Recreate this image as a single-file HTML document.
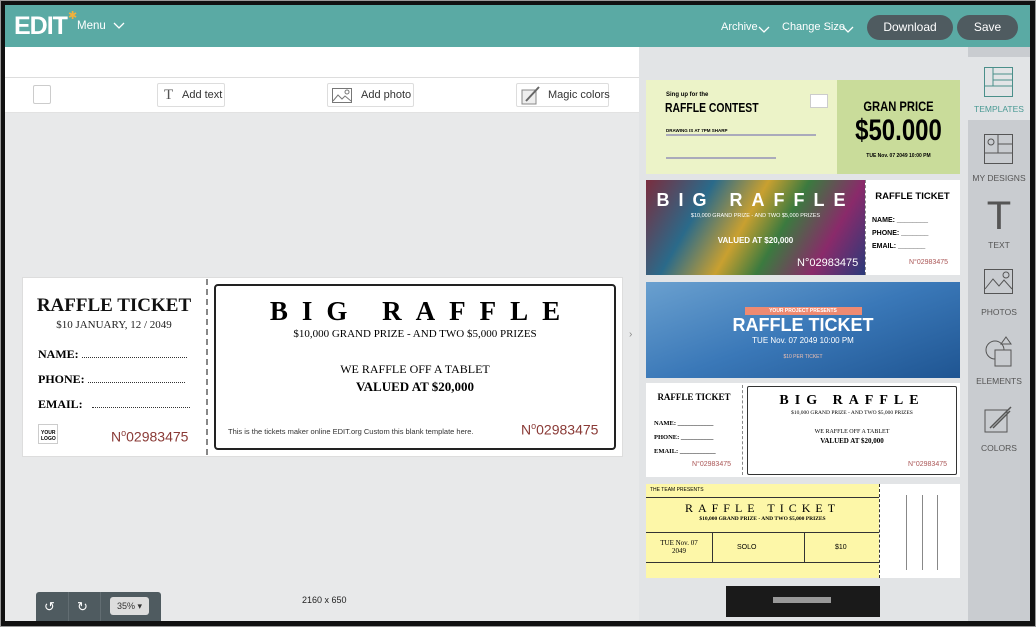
<!DOCTYPE html>
<html><head><meta charset="utf-8"><style>
*{margin:0;padding:0;box-sizing:border-box}
body{width:1036px;height:627px;overflow:hidden;background:#9a9a9a;font-family:"Liberation Sans",sans-serif;position:relative}
.a{position:absolute;white-space:nowrap}
.frame{left:1px;top:1px;width:1034px;height:625px;background:#111}
.hdr{left:5px;top:5px;width:1025px;height:42px;background:#5aaaa4;color:#fff}
.btn{background:#4f5b60;color:#fff;border-radius:16px;font-size:12px;text-align:center;line-height:25px;height:25px}
.serif{font-family:"Liberation Serif",serif}
.tb{border:1px solid #ddd;background:#fff;height:24px;font-size:11px;line-height:22px;color:#333;border-radius:2px}
.side{font-size:8.5px;color:#555;text-align:center;width:62px;left:968px}
.dl{display:inline-block;border-bottom:1px dotted #333;height:9px;vertical-align:baseline}
</style></head><body>
<div class="a frame"></div>
<div class="a" style="left:5px;top:5px;width:1025px;height:616px;background:#e8e9ea"></div>
<div class="a hdr">
 <div class="a" style="left:9px;top:7px;font-size:25px;font-weight:bold;letter-spacing:-1px">EDIT</div>
 <div class="a" style="left:63px;top:4px;color:#f2b13a;font-size:11px">✱</div>
 <div class="a" style="left:72px;top:15px;font-size:11.5px">Menu</div>
 <svg class="a" style="left:108px;top:17px" width="12" height="8"><path d="M1 1l5 5 5-5" stroke="#fff" fill="none" stroke-width="1.3"/></svg>
 <div class="a" style="left:716px;top:16px;font-size:11px">Archive</div>
 <svg class="a" style="left:753px;top:21px" width="12" height="8"><path d="M1 1l5 5 5-5" stroke="#fff" fill="none" stroke-width="1.3"/></svg>
 <div class="a" style="left:777px;top:16px;font-size:11px">Change Size</div>
 <svg class="a" style="left:837px;top:21px" width="12" height="8"><path d="M1 1l5 5 5-5" stroke="#fff" fill="none" stroke-width="1.3"/></svg>
 <div class="a btn" style="left:862px;top:10px;width:86px">Download</div>
 <div class="a btn" style="left:952px;top:10px;width:61px">Save</div>
</div>
<!-- toolbar -->
<div class="a" style="left:5px;top:47px;width:634px;height:66px;background:#fff"></div>
<div class="a" style="left:5px;top:77px;width:634px;height:1px;background:#ddd"></div>
<div class="a" style="left:5px;top:112px;width:634px;height:1px;background:#e2e2e2"></div>
<div class="a" style="left:33px;top:85px;width:18px;height:19px;border:1px solid #ccc;border-radius:2px"></div>
<div class="a tb" style="left:157px;top:83px;width:68px"><span style="position:absolute;left:6px;top:0;font-size:15px;font-family:'Liberation Serif',serif;color:#555">T</span><span style="position:absolute;left:24px">Add text</span></div>
<div class="a tb" style="left:327px;top:83px;width:87px"><svg style="position:absolute;left:4px;top:4px" width="20" height="15"><rect x=".5" y=".5" width="19" height="14" fill="none" stroke="#777"/><path d="M1 13l5-6 4 4 3-3 6 5" stroke="#777" fill="none"/><circle cx="15" cy="4" r="2" fill="none" stroke="#777"/></svg><span style="position:absolute;left:33px">Add photo</span></div>
<div class="a tb" style="left:516px;top:83px;width:93px"><svg style="position:absolute;left:4px;top:2px" width="20" height="19"><rect x="1" y="4" width="14" height="14" fill="#eee" stroke="#888"/><path d="M5 15L18 1" stroke="#666" stroke-width="2"/></svg><span style="position:absolute;left:31px">Magic colors</span></div>
<!-- main ticket -->
<div class="a" style="left:22px;top:277px;width:601px;height:180px;background:#fff;border:1px solid #ddd"></div>
<div class="a" style="left:206px;top:279px;height:176px;border-left:2px dashed #888"></div>
<div class="a serif" style="left:22px;top:295px;width:184px;text-align:center;font-size:19px;font-weight:bold;color:#111">RAFFLE TICKET</div>
<div class="a serif" style="left:22px;top:319px;width:184px;text-align:center;font-size:11px;color:#222">$10 JANUARY, 12 / 2049</div>
<div class="a serif" style="left:38px;top:347px;font-size:12px;font-weight:bold">NAME: <span class="dl" style="width:105px"></span></div>
<div class="a serif" style="left:38px;top:372px;font-size:12px;font-weight:bold">PHONE: <span class="dl" style="width:97px"></span></div>
<div class="a serif" style="left:38px;top:397px;font-size:12px;font-weight:bold">EMAIL: &nbsp;&nbsp;<span class="dl" style="width:98px"></span></div>
<div class="a" style="left:38px;top:424px;width:20px;height:20px;border:1px solid #ccc;font-size:5px;font-weight:bold;padding:5px 2px;line-height:6px;white-space:normal">YOUR LOGO</div>
<div class="a" style="left:111px;top:428px;font-size:14px;color:#8a3a36">N<sup style="font-size:9px">o</sup>02983475</div>
<div class="a" style="left:214px;top:284px;width:402px;height:166px;border:2px solid #222;border-radius:4px"></div>
<div class="a serif" style="left:214px;top:296px;width:402px;text-align:center;font-size:27px;font-weight:bold;letter-spacing:14px;padding-left:14px">BIG RAFFLE</div>
<div class="a serif" style="left:214px;top:328px;width:402px;text-align:center;font-size:11px">$10,000 GRAND PRIZE - AND TWO $5,000 PRIZES</div>
<div class="a serif" style="left:214px;top:362px;width:402px;text-align:center;font-size:12px">WE RAFFLE OFF A TABLET</div>
<div class="a serif" style="left:214px;top:379px;width:402px;text-align:center;font-size:13px;font-weight:bold">VALUED AT $20,000</div>
<div class="a" style="left:228px;top:427px;font-size:7.5px;color:#333">This is the tickets maker online EDIT.org Custom this blank template here.</div>
<div class="a" style="left:521px;top:421px;font-size:14px;color:#8a3a36">N<sup style="font-size:9px">o</sup>02983475</div>
<div class="a" style="left:629px;top:329px;font-size:10px;color:#888">›</div>
<!-- bottom bar -->
<div class="a" style="left:36px;top:592px;width:125px;height:29px;background:#4f5b60;border-radius:3px 3px 0 0"></div>
<div class="a" style="left:68px;top:592px;width:1px;height:29px;background:#626d72"></div>
<div class="a" style="left:100px;top:592px;width:1px;height:29px;background:#626d72"></div>
<div class="a" style="left:44px;top:599px;color:#fff;font-size:13px">↺</div>
<div class="a" style="left:77px;top:599px;color:#fff;font-size:13px">↻</div>
<div class="a" style="left:110px;top:597px;width:39px;height:18px;background:#ddd;border-radius:3px;font-size:9px;line-height:18px;text-align:center;color:#333">35% ▾</div>
<div class="a" style="left:302px;top:595px;font-size:9px;color:#222">2160 x 650</div>
<!-- template panel -->
<div class="a" style="left:639px;top:47px;width:329px;height:574px;background:#e2e4e6"></div>
<div class="a" style="left:646px;top:80px;width:191px;height:94px;background:#ecf3c8"></div>
<div class="a" style="left:837px;top:80px;width:123px;height:94px;background:#c9dc9a"></div>
<div class="a" style="left:666px;top:92px;font-size:6px;font-weight:bold">Sing up for the</div>
<div class="a" style="left:665px;top:100px;font-size:13px;font-weight:bold;transform:scaleX(.8);transform-origin:left">RAFFLE CONTEST</div>
<div class="a" style="left:666px;top:128px;font-size:4.5px;font-weight:bold">DRAWING IS AT 7PM SHARP</div>
<div class="a" style="left:666px;top:134px;width:150px;height:2px;background:#aab"></div>
<div class="a" style="left:666px;top:157px;width:110px;height:2px;background:#aab"></div>
<div class="a" style="left:810px;top:94px;width:18px;height:14px;background:#fff;border:1px solid #ccc"></div>
<div class="a" style="left:837px;top:98px;width:123px;text-align:center;font-size:14px;font-weight:bold;transform:scaleX(.8)">GRAN PRICE</div>
<div class="a" style="left:837px;top:114px;width:123px;text-align:center;font-size:30px;font-weight:bold;transform:scaleX(.8)">$50.000</div>
<div class="a" style="left:837px;top:153px;width:123px;text-align:center;font-size:5px;font-weight:bold">TUE Nov. 07 2049 10:00 PM</div>
<div class="a" style="left:646px;top:180px;width:219px;height:95px;background:linear-gradient(120deg,#7a2d3e,#2a6a8a 25%,#c9a030 45%,#3b7a3f 60%,#8a2a6a 80%,#2a3a7a)"></div>
<div class="a" style="left:646px;top:190px;width:219px;text-align:center;color:#fff;font-size:18px;font-weight:bold;letter-spacing:9px">BIG RAFFLE</div>
<div class="a" style="left:646px;top:213px;width:219px;text-align:center;color:#fff;font-size:5.5px">$10,000 GRAND PRIZE - AND TWO $5,000 PRIZES</div>
<div class="a" style="left:646px;top:236px;width:219px;text-align:center;color:#fff;font-size:8px;font-weight:bold">VALUED AT $20,000</div>
<div class="a" style="left:797px;top:257px;color:#fff;font-size:11px">N°02983475</div>
<div class="a" style="left:865px;top:180px;width:95px;height:95px;background:#fff;border-left:1px dashed #888"></div>
<div class="a" style="left:865px;top:191px;width:95px;text-align:center;font-size:9.5px;font-weight:bold">RAFFLE TICKET</div>
<div class="a" style="left:872px;top:214px;font-size:7px;font-weight:bold;line-height:13px">NAME: ________<br>PHONE: _______<br>EMAIL: _______</div>
<div class="a" style="left:909px;top:259px;font-size:7px;color:#a55">N°02983475</div>
<div class="a" style="left:646px;top:282px;width:314px;height:96px;background:linear-gradient(160deg,#6aa0cf,#3a78b8 50%,#1f5592)"></div>
<div class="a" style="left:745px;top:307px;width:117px;height:8px;background:#ee8a72"></div>
<div class="a" style="left:646px;top:307px;width:314px;text-align:center;color:#fff;font-size:5px;font-weight:bold;line-height:8px">YOUR PROJECT PRESENTS</div>
<div class="a" style="left:646px;top:315px;width:314px;text-align:center;color:#fff;font-size:18px;font-weight:bold">RAFFLE TICKET</div>
<div class="a" style="left:646px;top:336px;width:314px;text-align:center;color:#fff;font-size:8px">TUE Nov. 07 2049 10:00 PM</div>
<div class="a" style="left:646px;top:354px;width:314px;text-align:center;color:#f0c0b0;font-size:5px">$10 PER TICKET</div>
<div class="a" style="left:646px;top:383px;width:314px;height:94px;background:#fff"></div>
<div class="a" style="left:742px;top:385px;height:90px;border-left:1px dashed #888"></div>
<div class="a" style="left:747px;top:386px;width:210px;height:89px;border:1px solid #333;border-radius:2px"></div>
<div class="a serif" style="left:646px;top:392px;width:96px;text-align:center;font-size:9px;font-weight:bold">RAFFLE TICKET</div>
<div class="a serif" style="left:654px;top:417px;font-size:6.5px;font-weight:bold;line-height:14px">NAME: ___________<br>PHONE: __________<br>EMAIL: ___________</div>
<div class="a" style="left:692px;top:461px;font-size:7px;color:#a55">N°02983475</div>
<div class="a serif" style="left:747px;top:393px;width:210px;text-align:center;font-size:14px;font-weight:bold;letter-spacing:6px">BIG RAFFLE</div>
<div class="a serif" style="left:747px;top:410px;width:210px;text-align:center;font-size:5.5px">$10,000 GRAND PRIZE - AND TWO $5,000 PRIZES</div>
<div class="a serif" style="left:747px;top:429px;width:210px;text-align:center;font-size:6px">WE RAFFLE OFF A TABLET</div>
<div class="a serif" style="left:747px;top:437px;width:210px;text-align:center;font-size:7px;font-weight:bold">VALUED AT $20,000</div>
<div class="a" style="left:908px;top:461px;font-size:7px;color:#a55">N°02983475</div>
<div class="a" style="left:646px;top:484px;width:233px;height:94px;background:#fdf7a8"></div>
<div class="a" style="left:646px;top:497px;width:233px;height:66px;border-top:1px solid #333;border-bottom:1px solid #333"></div>
<div class="a" style="left:646px;top:532px;width:233px;border-top:1px solid #333"></div>
<div class="a" style="left:712px;top:532px;height:31px;border-left:1px solid #333"></div>
<div class="a" style="left:804px;top:532px;height:31px;border-left:1px solid #333"></div>
<div class="a" style="left:650px;top:487px;font-size:5px">THE TEAM PRESENTS</div>
<div class="a serif" style="left:646px;top:501px;width:233px;text-align:center;font-size:12px;letter-spacing:5px">RAFFLE TICKET</div>
<div class="a serif" style="left:646px;top:516px;width:233px;text-align:center;font-size:5.5px;font-weight:bold">$10,000 GRAND PRIZE - AND TWO $5,000 PRIZES</div>
<div class="a serif" style="left:646px;top:539px;width:66px;text-align:center;font-size:7px;line-height:8px">TUE Nov. 07<br>2049</div>
<div class="a" style="left:737px;top:544px;font-size:7px">SOLO</div>
<div class="a" style="left:835px;top:544px;font-size:7px">$10</div>
<div class="a" style="left:879px;top:484px;width:81px;height:94px;background:#fff;border-left:1px dashed #333"></div>
<div class="a" style="left:906px;top:495px;width:1px;height:75px;background:#888"></div>
<div class="a" style="left:922px;top:495px;width:1px;height:75px;background:#888"></div>
<div class="a" style="left:937px;top:495px;width:1px;height:75px;background:#888"></div>
<div class="a" style="left:726px;top:586px;width:154px;height:31px;background:#1a1a1a"></div>
<div class="a" style="left:773px;top:597px;width:58px;height:6px;background:#999"></div>
<!-- sidebar -->
<div class="a" style="left:968px;top:47px;width:62px;height:574px;background:#c9ccd0"></div>
<div class="a" style="left:968px;top:57px;width:62px;height:63px;background:#e2e4e6"></div>
<svg class="a" style="left:984px;top:67px" width="29" height="30"><rect x=".5" y=".5" width="28" height="29" fill="none" stroke="#4a8f8a"/><path d="M.5 19h28M9 .5v19M9 7h20M9 13h20" stroke="#4a8f8a" fill="none"/></svg>
<div class="a side" style="top:104px;color:#4a9a94">TEMPLATES</div>
<svg class="a" style="left:984px;top:134px" width="29" height="30"><rect x=".5" y=".5" width="28" height="29" fill="none" stroke="#555"/><path d="M.5 19h28M14 .5v19M14 10h15" stroke="#555" fill="none"/><circle cx="7" cy="8" r="3" fill="none" stroke="#555"/></svg>
<div class="a side" style="top:173px">MY DESIGNS</div>
<div class="a" style="left:984px;top:196px;font-size:40px;color:#555;font-family:'Liberation Sans';font-weight:lighter;width:30px;text-align:center;line-height:40px">T</div>
<div class="a side" style="top:240px">TEXT</div>
<svg class="a" style="left:984px;top:269px" width="29" height="25"><rect x=".5" y=".5" width="28" height="24" fill="none" stroke="#555"/><path d="M1 20l8-10 6 7 5-6 8 9" stroke="#555" fill="none"/><circle cx="22" cy="6" r="3" fill="none" stroke="#555"/></svg>
<div class="a side" style="top:307px">PHOTOS</div>
<svg class="a" style="left:984px;top:336px" width="30" height="32"><circle cx="11" cy="14" r="9" fill="none" stroke="#555"/><rect x="11" y="14" width="16" height="16" fill="#c9ccd0" stroke="#555"/><path d="M22 1l5 7h-10z" fill="none" stroke="#555"/></svg>
<div class="a side" style="top:376px">ELEMENTS</div>
<svg class="a" style="left:984px;top:404px" width="30" height="30"><rect x="1" y="6" width="22" height="22" fill="none" stroke="#555"/><path d="M6 24L27 3M9 24l17-17" stroke="#555" stroke-width="1.5"/></svg>
<div class="a side" style="top:443px">COLORS</div>
</body></html>
